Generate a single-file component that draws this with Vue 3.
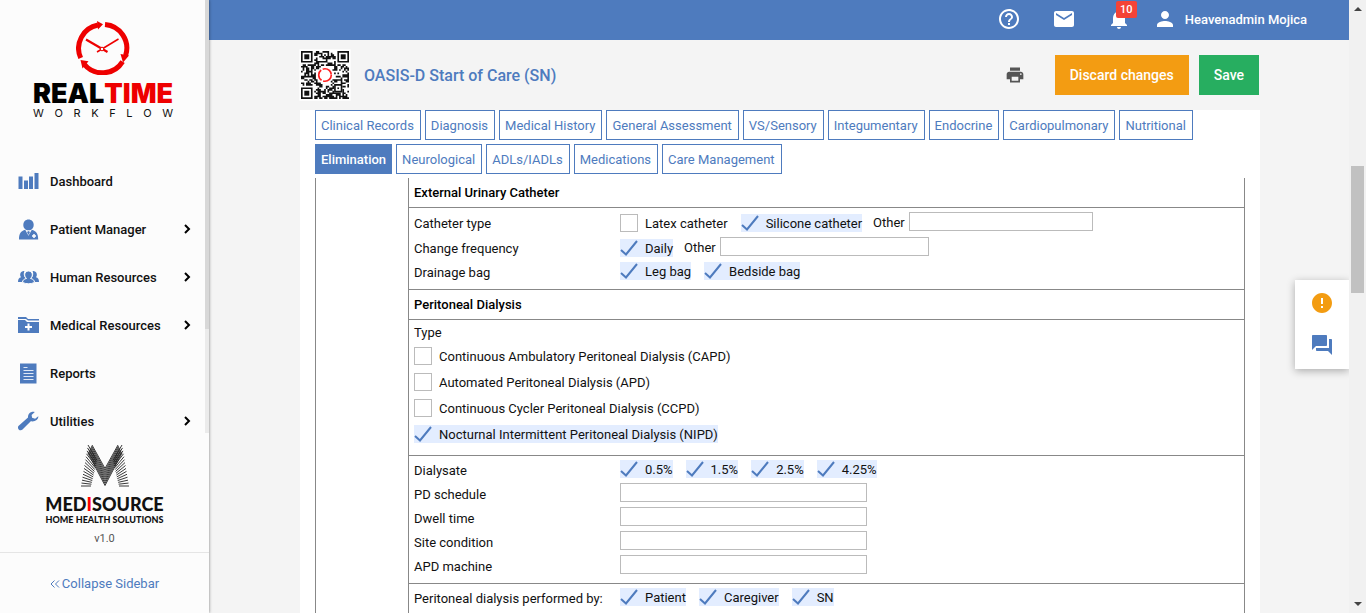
<script setup>
import { ref, reactive } from 'vue'

const navItems = [
  { label: 'Dashboard', icon: 'chart', expandable: false },
  { label: 'Patient Manager', icon: 'patient', expandable: true },
  { label: 'Human Resources', icon: 'people', expandable: true },
  { label: 'Medical Resources', icon: 'folder', expandable: true },
  { label: 'Reports', icon: 'report', expandable: false },
  { label: 'Utilities', icon: 'wrench', expandable: true }
]

const tabs = [
  'Clinical Records', 'Diagnosis', 'Medical History', 'General Assessment', 'VS/Sensory',
  'Integumentary', 'Endocrine', 'Cardiopulmonary', 'Nutritional', 'Elimination',
  'Neurological', 'ADLs/IADLs', 'Medications', 'Care Management'
]
const activeTab = ref('Elimination')

const opt = (label, checked = true) => ({ kind: 'check', label, checked })
const catheterRows = reactive([
  { label: 'Catheter type', mixed: true, options: [opt('Latex catheter', false), opt('Silicone catheter')], other: { id: 'catheter-other', size: 'medium', value: '' } },
  { label: 'Change frequency', mixed: true, options: [opt('Daily')], other: { id: 'frequency-other', size: 'large', value: '' } },
  { label: 'Drainage bag', options: [opt('Leg bag'), opt('Bedside bag')] }
])
const dialysisTypes = reactive([
  opt('Continuous Ambulatory Peritoneal Dialysis (CAPD)', false),
  opt('Automated Peritoneal Dialysis (APD)', false),
  opt('Continuous Cycler Peritoneal Dialysis (CCPD)', false),
  opt('Nocturnal Intermittent Peritoneal Dialysis (NIPD)')
])
const dialysate = reactive([opt('0.5%'), opt('1.5%'), opt('2.5%'), opt('4.25%')])
const textFields = reactive([
  { id: 'pd-schedule', label: 'PD schedule', value: '' },
  { id: 'dwell-time', label: 'Dwell time', value: '' },
  { id: 'site-condition', label: 'Site condition', value: '' },
  { id: 'apd-machine', label: 'APD machine', value: '' }
])
const performers = reactive([opt('Patient'), opt('Caregiver'), opt('SN')])

// QR modules on a 29 x 29 grid, with the three finder squares and a clear centre.
const N = 29
function buildQr() {
  let d = ''
  let seed = 7919
  const cell = (x, y, w = 1, h = 1) => { d += `M${x} ${y}h${w}v${h}h-${w}z` }
  for (let y = 0; y < N; y++) {
    for (let x = 0; x < N; x++) {
      seed = (seed * 1103515245 + 12345) % 2147483648
      const bit = (seed >> 16) & 15
      const inFinder = (x < 8 && y < 8) || (x > N - 9 && y < 8) || (x < 8 && y > N - 9)
      const inCentre = Math.hypot(x - 14, y - 14) < 5.4
      const inAlign = x > 19 && x < 25 && y > 19 && y < 25
      if (!inFinder && !inCentre && !inAlign && bit > 6) cell(x, y)
    }
  }
  return d
}
const qrPath = buildQr()

// The M: two legs of fine strokes that flatten towards the foot, and a V of strokes that meet in the centre.
const both = (x1, y1, x2, y2) => `M${x1} ${y1}L${x2} ${y2}M${48 - x1} ${y1}L${48 - x2} ${y2}`
const legs = Array.from({ length: 15 }, (_, i) => {
  const t = i / 14
  return both(7 - 7 * t, 0.5 + 41 * t, 16 - 6 * t, 16 + 25.5 * t)
})
const vee = Array.from({ length: 9 }, (_, i) => {
  const s = i / 8
  return both(11 - 4 * s, 0.5 + 8 * s, 24, 24 + 17 * s)
})
const mPath = [...legs, ...vee].join('')
</script>

<template>
  <div class="app">
    <aside class="sidebar">
      <div class="sidebar-scroll">
        <div class="sidebar-content">
          <div class="brand">
            <svg class="brand-clock" viewBox="0 0 54 54" aria-hidden="true">
              <g fill="none" stroke="#ee0000" stroke-width="5">
                <path d="M29 3.500A23.700 23.700 0 0 1 49.600 34.500" />
                <path d="M46.600 40.600A23.700 23.700 0 0 1 8 43" />
                <path d="M4.700 37A23.700 23.700 0 0 1 22 4" />
              </g>
              <path fill="#ee0000" d="M21 0l6 3.300-5 5.200zM44.500 33l8.500 1.500-6 7zM4.500 39l8 1.200-6 7.300z" />
              <path d="M42.500 18L21 31" stroke="#ee0000" stroke-width="1.500" fill="none" />
              <path d="M10 18.500L31.500 31" stroke="#ee0000" stroke-width="2.200" />
              <circle cx="26" cy="28" r="1.800" fill="#fff" stroke="#ee0000" />
            </svg>
            <div class="brand-name">REAL<span>TIME</span></div>
            <div class="brand-sub" aria-label="WORKFLOW"><span v-for="(c, i) in 'WORKFLOW'" :key="i">{{ c }}</span></div>
          </div>
          <nav>
            <a v-for="item in navItems" :key="item.label" href="#" class="nav-item">
              <svg class="nav-icon" viewBox="0 0 21 21" aria-hidden="true">
                <path v-if="item.icon === 'chart'" d="M0.500 5.500h4v12.500h-4zM6 9.500h4v8.500h-4zM11 5.500h4v12.500h-4zM16.500 2h4v16h-4z" />
                <g v-else-if="item.icon === 'patient'">
                  <path d="M10.500 0.500c3 0 5.200 2.200 5.200 5.400 0 3-2.200 5.400-5.200 5.400S5.300 9 5.300 5.900C5.300 2.700 7.500 .5 10.500 .5z" />
                  <path d="M1 20.500c0-6 2-8.500 6.200-9.700l3.300 6 3.300-6c4.200 1.200 6.400 3.700 6.400 9.700z" />
                  <path d="M10.500 12l1.500 1-1.500 3-1.500-3z" />
                  <path d="M14 17h4M16 15v4" stroke="#fff" stroke-width="1.500" />
                </g>
                <g v-else-if="item.icon === 'people'">
                  <path d="M4 4.500a3 3 0 0 1 2.500-.5C5 7 6 10 8 11.500l-4 3.500H0c0-3 1-4 3-4.700C1.500 8.500 2 5.500 4 4.500zM17 4.500a3 3 0 0 0-2.500-.5c1.500 3 .5 6-1.500 7.500l4 3.500h4c0-3-1-4-3-4.700 1.500-1.800 1-4.800-1-5.800z" />
                  <path d="M10.500 4c2.300 0 3.800 1.600 3.800 3.800 0 1.600-.7 2.800-1.800 3.600 2.500.6 4 1.800 4 4-3 1.800-9 1.800-12 0 0-2.200 1.500-3.400 4-4-1.100-.8-1.800-2-1.800-3.600C6.700 5.600 8.200 4 10.500 4z" stroke="#fcfcfc" />
                </g>
                <g v-else-if="item.icon === 'folder'">
                  <path d="M0 2h8l2 2h11v1.500H10L8 4H0z" /><path d="M0 5h7l2 2h12v11H0z" />
                  <path d="M7 12h7M10.500 8.500v7" stroke="#fff" stroke-width="2" />
                </g>
                <g v-else-if="item.icon === 'report'">
                  <path d="M2 .5h16.500v20H2z" />
                  <path d="M5.500 4.500h4M5.500 7.500h10M5.500 10.500h10M5.500 13.500h10M5.500 16.500h10" stroke="#dfe8f5" stroke-width="1" />
                </g>
                <path v-else d="M20.300 5.200l-3.200 2.600-3-1-.5-2.900L16.800 1C13 0 9.800 2.500 10 6.500l-9.300 8.200c-1 1-1 2.600 0 3.700s2.600 1.300 3.800.2l8.300-8.300c4 .8 7.800-1.400 7.500-5.100z" />
              </svg>
              <span class="nav-label">{{ item.label }}</span>
              <svg v-if="item.expandable" class="nav-caret" viewBox="0 0 8 10" aria-hidden="true"><path d="M2 1l4 4-4 4" fill="none" stroke="#000" stroke-width="2" /></svg>
            </a>
          </nav>
        </div>
        <div class="sidebar-track"><div class="sidebar-thumb"></div></div>
      </div>
      <div class="agency">
        <svg class="agency-mark" viewBox="0 0 48 42" aria-hidden="true">
          <path :d="mPath" stroke="#222" stroke-width="0.900" fill="none" />
        </svg>
        <div class="agency-name">MED<span>I</span>SOURCE</div>
        <div class="agency-sub">HOME HEALTH SOLUTIONS</div>
        <div class="version">v1.0</div>
      </div>
      <button class="collapse" type="button">
        <svg viewBox="0 0 10 8" aria-hidden="true"><path d="M4.500 .5L1 4l3.500 3.500M9 .5L5.500 4 9 7.500" fill="none" stroke="#4e7bbe" /></svg>
        Collapse Sidebar
      </button>
    </aside>

    <div class="page">
      <header class="topbar">
        <button type="button" class="icon-button" aria-label="Help">
          <svg viewBox="0 0 24 24"><path d="M11 18h2v-2h-2v2zm1-16C6.480 2 2 6.480 2 12s4.480 10 10 10 10-4.480 10-10S17.520 2 12 2zm0 18c-4.410 0-8-3.590-8-8s3.590-8 8-8 8 3.590 8 8-3.590 8-8 8zm0-14c-2.210 0-4 1.790-4 4h2c0-1.100.9-2 2-2s2 .9 2 2c0 2-3 1.750-3 5h2c0-2.250 3-2.500 3-5 0-2.210-1.790-4-4-4z" /></svg>
        </button>
        <button type="button" class="icon-button" aria-label="Messages">
          <svg viewBox="0 0 24 24"><path d="M20 4H4c-1.100 0-2 .9-2 2v12c0 1.100.9 2 2 2h16c1.100 0 2-.9 2-2V6c0-1.100-.9-2-2-2zm0 4l-8 5-8-5V6l8 5 8-5v2z" /></svg>
        </button>
        <button type="button" class="icon-button" aria-label="Notifications">
          <svg viewBox="0 0 24 24"><path d="M12 22c1.100 0 2-.9 2-2h-4c0 1.100.9 2 2 2zm6-6v-5c0-3.070-1.640-5.640-4.500-6.320V4c0-.83-.67-1.500-1.500-1.500s-1.500.67-1.500 1.500v.68C7.630 5.360 6 7.920 6 11v5l-2 2v1h16v-1l-2-2z" /></svg>
          <span class="badge">10</span>
        </button>
        <a href="#" class="user">
          <svg viewBox="0 0 24 24" aria-hidden="true"><path d="M12 12c2.210 0 4-1.790 4-4s-1.790-4-4-4-4 1.790-4 4 1.790 4 4 4zm0 2c-2.670 0-8 1.340-8 4v2h16v-2c0-2.660-5.330-4-8-4z" /></svg>
          <span class="user-name">Heavenadmin Mojica</span>
        </a>
      </header>

      <main class="content">
        <div class="title-bar">
          <svg class="qr" :viewBox="`0 0 ${N} ${N}`" role="img" aria-label="QR code">
            <path fill="#fff" :d="`M-1 -1h${N + 2}v${N + 2}h-${N + 2}z`" />
            <path :d="qrPath" fill="#111" />
            <g v-for="p in [[0, 0], [22, 0], [0, 22]]" :key="p.join()" :transform="`translate(${p[0]} ${p[1]})`">
              <path d="M.5.5h6v6h-6z" fill="none" stroke="#111" /><path d="M2 2h3v3H2z" fill="#111" />
            </g>
            <path d="M20.500 20.500h4v4h-4z" fill="none" stroke="#111" /><path d="M22 22h1v1h-1z" fill="#111" />
            <circle cx="14.500" cy="14.500" r="3.800" fill="none" stroke="#f22" stroke-width="1" stroke-dasharray="7 1" />
          </svg>
          <h1>OASIS-D Start of Care (SN)</h1>
          <button type="button" class="print" aria-label="Print">
            <svg viewBox="0 0 24 24"><path d="M19 8H5c-1.660 0-3 1.340-3 3v6h4v4h12v-4h4v-6c0-1.660-1.340-3-3-3zm-3 11H8v-5h8v5zm3-7c-.55 0-1-.45-1-1s.45-1 1-1 1 .45 1 1-.45 1-1 1zm-1-9H6v4h12V3z" /></svg>
          </button>
          <button type="button" class="action discard">Discard changes</button>
          <button type="button" class="action save">Save</button>
        </div>

        <div class="sheet">
          <div class="tabs" role="tablist">
            <button v-for="t in tabs" :key="t" type="button" role="tab" class="tab" :class="{ active: t === activeTab }" :aria-selected="t === activeTab" @click="activeTab = t">{{ t }}</button>
          </div>

          <form class="form" @submit.prevent>
            <div class="form-body">
              <h2>External Urinary Catheter</h2>
              <section class="catheter">
                <div v-for="row in catheterRows" :key="row.label" class="row" :class="{ mixed: row.mixed }">
                  <span class="row-label">{{ row.label }}</span>
                  <div class="controls">
                    <label v-for="o in row.options" :key="o.label" class="option" :class="{ on: o.checked }">
                      <span class="tick"><input v-model="o.checked" type="checkbox"><svg v-if="o.checked" viewBox="0 0 18 18"><path d="M1 11l5 4.500L17 2" /></svg></span>{{ o.label }}
                    </label>
                    <template v-if="row.other">
                      <label class="other" :for="row.other.id">Other</label>
                      <input :id="row.other.id" v-model="row.other.value" type="text" :class="row.other.size">
                    </template>
                  </div>
                </div>
              </section>

              <h2>Peritoneal Dialysis</h2>
              <section class="types">
                <span class="types-title">Type</span>
                <label v-for="o in dialysisTypes" :key="o.label" class="option" :class="{ on: o.checked }">
                  <span class="tick"><input v-model="o.checked" type="checkbox"><svg v-if="o.checked" viewBox="0 0 18 18"><path d="M1 11l5 4.500L17 2" /></svg></span>{{ o.label }}
                </label>
              </section>

              <section>
                <div class="row">
                  <span class="row-label">Dialysate</span>
                  <div class="controls">
                    <label v-for="o in dialysate" :key="o.label" class="option" :class="{ on: o.checked }">
                      <span class="tick"><input v-model="o.checked" type="checkbox"><svg v-if="o.checked" viewBox="0 0 18 18"><path d="M1 11l5 4.500L17 2" /></svg></span>{{ o.label }}
                    </label>
                  </div>
                </div>
                <div v-for="f in textFields" :key="f.id" class="row">
                  <label class="row-label" :for="f.id">{{ f.label }}</label>
                  <div class="controls"><input :id="f.id" v-model="f.value" type="text" class="wide"></div>
                </div>
              </section>

              <section>
                <div class="row">
                  <span class="row-label">Peritoneal dialysis performed by:</span>
                  <div class="controls">
                    <label v-for="o in performers" :key="o.label" class="option" :class="{ on: o.checked }">
                      <span class="tick"><input v-model="o.checked" type="checkbox"><svg v-if="o.checked" viewBox="0 0 18 18"><path d="M1 11l5 4.500L17 2" /></svg></span>{{ o.label }}
                    </label>
                  </div>
                </div>
              </section>
            </div>
          </form>
        </div>
      </main>

      <div class="quick-panel">
        <button type="button" class="alert" aria-label="Alerts"><svg viewBox="0 0 24 24"><path d="M12 2C6.480 2 2 6.480 2 12s4.480 10 10 10 10-4.480 10-10S17.520 2 12 2zm1 15h-2v-2h2v2zm0-4h-2V7h2v6z" /></svg></button>
        <button type="button" class="chat" aria-label="Chat"><svg viewBox="0 0 24 24"><path d="M21 6h-2v9H6v2c0 .55.45 1 1 1h11l4 4V7c0-.55-.45-1-1-1zm-4 6V3c0-.55-.45-1-1-1H3c-.55 0-1 .45-1 1v14l4-4h10c.55 0 1-.45 1-1z" /></svg></button>
      </div>
    </div>

    <div class="scrollbar" aria-hidden="true">
      <svg viewBox="0 0 17 17"><path d="M5 11l4-4 4 4z" /></svg>
      <div class="scroll-lane"><div class="scroll-thumb"></div></div>
      <svg viewBox="0 0 17 17"><path d="M5 6l4 4 4-4z" /></svg>
    </div>
  </div>
</template>

<style>
body { margin: 0; background: #f4f4f4; }
</style>

<style scoped>
* { box-sizing: border-box; }
.app {
  display: grid;
  grid-template-columns: 209px minmax(0, 1fr) 17px;
  height: 100vh;
  overflow: hidden;
  background: #f4f4f4;
  color: #111;
  font: 13px/18px Roboto, "Liberation Sans", sans-serif;
}
button, input { font: inherit; margin: 0; padding: 0; border: 0; border-radius: 0; }
button { background: none; cursor: pointer; }
a { color: inherit; text-decoration: none; }
svg { display: block; }

.sidebar {
  display: flex;
  flex-direction: column;
  min-height: 0;
  background: #fcfcfc;
  box-shadow: 0 0 3px rgba(0, 0, 0, .5);
  z-index: 2;
}
.sidebar-scroll { flex: 1; display: flex; min-height: 0; overflow: hidden; }
.sidebar-content { flex: 1; }
.sidebar-track { width: 5px; background: #ebebeb; }
.sidebar-thumb { height: 76%; background: #d8d8d8; }
.brand { height: 157px; padding: 21px 32px 0 33px; }
.brand-clock { width: 54px; height: 54px; margin: 0 auto; }
.brand-name { margin-top: 6px; font: 900 27px/26px Inter, sans-serif; color: #000; white-space: nowrap; display: flex; justify-content: center; }
.brand-name span { color: #ee0000; }
.brand-sub { display: flex; justify-content: space-between; font: 11px/12px Inter, sans-serif; }
.nav-item { display: flex; align-items: center; height: 48px; padding: 0 14px 0 18px; color: #111; font-weight: 500; }
.nav-icon { width: 21px; height: 21px; margin-right: 11px; fill: #4e7bbe; }
.nav-label { flex: 1; padding-top: 2px; }
.nav-caret { width: 8px; height: 10px; }
.agency { height: 120px; padding-top: 11px; text-align: center; color: #111; border-bottom: 1px solid #e5e5e5; }
.agency-mark { width: 48px; height: 43px; margin: 0 auto; }
.agency-name { margin-top: 7px; font: 900 18px/20px Lato, sans-serif; }
.agency-name span { color: #f00; }
.agency-sub { font: 900 9px/12px Lato, sans-serif; }
.version { margin-top: 6px; font-size: 11px; line-height: 14px; color: #555; }
.collapse { height: 60px; padding-top: 2px; display: flex; align-items: center; justify-content: center; gap: 2px; color: #4e7bbe; }
.collapse svg { width: 10px; height: 8px; }

.page { display: flex; flex-direction: column; min-width: 0; min-height: 0; position: relative; }
.topbar { flex: none; display: flex; align-items: center; justify-content: flex-end; gap: 31px; height: 40px; padding-right: 42px; padding-bottom: 2px; background: #4e7bbe; color: #fff; }
.topbar svg { width: 24px; height: 24px; fill: #fff; }
.icon-button { position: relative; width: 24px; height: 24px; }
.badge { position: absolute; left: 9px; top: -6px; width: 21px; height: 17px; border-radius: 2px; background: #f44336; color: #fff; font-size: 11px; font-weight: 500; line-height: 17px; }
.user { display: flex; align-items: center; gap: 8px; margin-left: -9px; font-weight: 500; }
.user-name { padding-top: 2px; }

.content { flex: 1; display: flex; flex-direction: column; min-height: 0; margin: 0 89px 0 91px; }
.title-bar { flex: none; display: flex; align-items: center; height: 70px; padding-left: 1px; padding-right: 1px; }
.qr { width: 48px; height: 48px; overflow: visible; }
h1 { flex: 1; margin: 0 0 0 15px; padding-top: 2px; font-size: 16px; line-height: 20px; font-weight: 500; color: #4e7bbe; }
.print { margin-right: 30px; }
.print svg { width: 20px; height: 20px; fill: #555; }
.action { height: 40px; padding: 0 15px; color: #fff; font-size: 14px; font-weight: 500; }
.discard { background: #f39c12; }
.save { margin-left: 10px; background: #27ae60; }

.sheet { flex: 1; min-height: 0; overflow: hidden; padding: 0 15px; background: #fff; }
.tabs { display: flex; flex-wrap: wrap; gap: 4px; padding-bottom: 4px; }
.tab { height: 30px; padding: 2px 6px 0 5px; border: 1px solid #4e7bbe; background: #fff; color: #4e7bbe; }
.tab.active { padding-right: 5px; background: #4e7bbe; color: #fff; font-weight: 500; }

.form { padding-left: 92px; border: 1px solid #888; border-top: 0; }
.form-body { border-left: 1px solid #888; }
h2 { margin: 0; height: 30px; padding: 0 5px; border-bottom: 1px solid #888; font-size: 13px; line-height: 29px; font-weight: 500; color: #000; }
section { padding: 3px 5px 4px; border-bottom: 1px solid #888; }
section.catheter { padding-top: 4px; }
.row { display: grid; grid-template-columns: 206px 1fr; min-height: 24px; }
.catheter .row:first-child { min-height: 25px; }
.row-label { line-height: 24px; }
.controls { display: flex; align-items: flex-start; }
.option { display: inline-flex; align-items: flex-start; height: 18px; margin: 1px 13px 0 0; line-height: 20px; white-space: nowrap; }
.mixed .option { margin-top: 2px; }
.option.on { background: #e3edff; }
.tick { display: grid; width: 18px; height: 18px; margin-right: 7px; }
.tick > * { grid-area: 1 / 1; width: 18px; height: 18px; }
.tick input { appearance: none; border: 1px solid #bbb; background: #fff; }
.option.on .tick input { border: 0; background: none; }
.tick svg { pointer-events: none; fill: none; stroke: #4e7bbe; stroke-width: 2; }
.other { margin: 2px 4px 0 -2px; }
input[type="text"] { height: 19px; padding: 0 4px; border: 1px solid #bbb; background: #fff; }
.medium { width: 184px; }
.large { width: 209px; }
.wide { width: 247px; }
section.types { display: flex; flex-direction: column; align-items: flex-start; padding: 4px 5px 12px; }
.types-title { margin-bottom: 5px; }
.types .option { margin: 0 0 8px; }
.types .option:last-child { margin-bottom: 0; }

.quick-panel { position: absolute; right: 0; top: 280px; width: 54px; padding: 11px 15px 12px; display: grid; gap: 18px; background: #fff; box-shadow: 0 2px 8px rgba(0, 0, 0, .3); clip-path: inset(-12px 0 -12px -12px); }
.quick-panel svg { width: 24px; height: 24px; }
.alert { fill: #f39c12; }
.chat { fill: #4e7bbe; }

.scrollbar { display: flex; flex-direction: column; background: #f1f1f1; }
.scrollbar svg { width: 17px; height: 17px; fill: #444; }
.scroll-lane { flex: 1; padding: 0 2px; }
.scroll-thumb { height: 22%; background: #c1c1c1; }
.scroll-lane::before { content: ""; display: block; height: 149px; }
</style>
